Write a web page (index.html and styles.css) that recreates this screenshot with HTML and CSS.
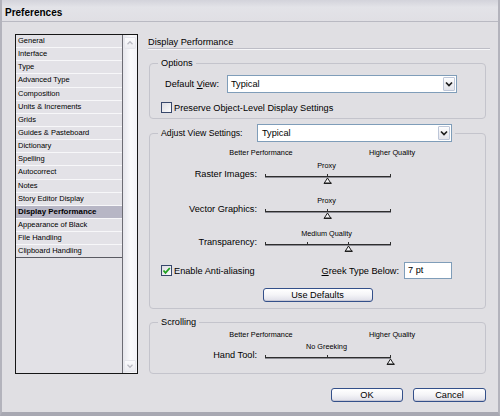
FILE: index.html
```html
<!DOCTYPE html>
<html>
<head>
<meta charset="utf-8">
<title>Preferences</title>
<link rel="stylesheet" href="styles.css">
</head>
<body>
<div class="window">
  <div class="titlebar">Preferences</div>
  <div class="content">
    <div class="listbox">
      <ul class="items">
        <li>General</li>
        <li>Interface</li>
        <li>Type</li>
        <li>Advanced Type</li>
        <li>Composition</li>
        <li>Units &amp; Increments</li>
        <li>Grids</li>
        <li>Guides &amp; Pasteboard</li>
        <li>Dictionary</li>
        <li>Spelling</li>
        <li>Autocorrect</li>
        <li>Notes</li>
        <li>Story Editor Display</li>
        <li class="selected">Display Performance</li>
        <li>Appearance of Black</li>
        <li>File Handling</li>
        <li>Clipboard Handling</li>
      </ul>
      <div class="scrollbar">
        <div class="sbtn"><svg width="12" height="12" viewBox="0 0 12 12"><polyline points="3,7.5 6,4.5 9,7.5" fill="none" stroke="#b9b9c2" stroke-width="1.5"/></svg></div>
        <div class="sbtn"><svg width="12" height="12" viewBox="0 0 12 12"><polyline points="3,4.5 6,7.5 9,4.5" fill="none" stroke="#b9b9c2" stroke-width="1.5"/></svg></div>
      </div>
    </div>

    <div class="panel">
      <div class="heading">Display Performance</div>

      <fieldset class="group options">
        <legend>Options</legend>
        <div class="dv-row">
          <span class="dv-label">Default <u>V</u>iew:</span>
          <div class="select dv-select">
            <span class="sel-text">Typical</span>
            <span class="arrow"><svg width="8" height="6" viewBox="0 0 8 6"><polyline points="1,1.5 4,4.5 7,1.5" fill="none" stroke="#1e1e1e" stroke-width="1.7"/></svg></span>
          </div>
        </div>
        <div class="check-row">
          <span class="cb"></span>
          <span>Preserve Object-Level Display Settings</span>
        </div>
      </fieldset>

      <fieldset class="group adjust">
        <legend>
          <div class="legend-flex">
            <span class="adj-label">Ad<u>j</u>ust View Settings:</span>
            <div class="select adj-select">
              <span class="sel-text">Typical</span>
              <span class="arrow"><svg width="8" height="6" viewBox="0 0 8 6"><polyline points="1,1.5 4,4.5 7,1.5" fill="none" stroke="#1e1e1e" stroke-width="1.7"/></svg></span>
            </div>
          </div>
        </legend>
        <div class="scale"><span>Better Performance</span><span>Higher Quality</span></div>

        <div class="srow r1">
          <span class="slabel">Raster Images:</span>
          <div class="slider">
            <div class="val">Proxy</div>
            <svg class="track" width="134" height="10" viewBox="0 0 134 10">
              <rect x="3" y="2" width="126" height="1" fill="#2e2e2e"/>
              <rect x="3" y="3" width="126" height="1" fill="#8c8c94"/>
              <rect x="3" y="0" width="1" height="2" fill="#2e2e2e"/>
              <rect x="65" y="0" width="1" height="2" fill="#2e2e2e"/>
              <rect x="128" y="0" width="1" height="2" fill="#2e2e2e"/>
              <polygon points="65.5,4 69,9.5 62,9.5" fill="#f2f2f4" stroke="#1e1e1e" stroke-width="1"/>
              <rect x="62" y="8.5" width="7.5" height="1.5" fill="#1e1e1e"/>
            </svg>
          </div>
        </div>

        <div class="srow r2">
          <span class="slabel">Vector Graphics:</span>
          <div class="slider">
            <div class="val">Proxy</div>
            <svg class="track" width="134" height="10" viewBox="0 0 134 10">
              <rect x="3" y="2" width="126" height="1" fill="#2e2e2e"/>
              <rect x="3" y="3" width="126" height="1" fill="#8c8c94"/>
              <rect x="3" y="0" width="1" height="2" fill="#2e2e2e"/>
              <rect x="65" y="0" width="1" height="2" fill="#2e2e2e"/>
              <rect x="128" y="0" width="1" height="2" fill="#2e2e2e"/>
              <polygon points="65.5,4 69,9.5 62,9.5" fill="#f2f2f4" stroke="#1e1e1e" stroke-width="1"/>
              <rect x="62" y="8.5" width="7.5" height="1.5" fill="#1e1e1e"/>
            </svg>
          </div>
        </div>

        <div class="srow r3">
          <span class="slabel">Transparency:</span>
          <div class="slider">
            <div class="val">Medium Quality</div>
            <svg class="track" width="134" height="10" viewBox="0 0 134 10">
              <rect x="3" y="2" width="126" height="1" fill="#2e2e2e"/>
              <rect x="3" y="3" width="126" height="1" fill="#8c8c94"/>
              <rect x="3" y="0" width="1" height="2" fill="#2e2e2e"/>
              <rect x="45" y="0" width="1" height="2" fill="#2e2e2e"/>
              <rect x="86" y="0" width="1" height="2" fill="#2e2e2e"/>
              <rect x="128" y="0" width="1" height="2" fill="#2e2e2e"/>
              <polygon points="86.5,4 90,9.5 83,9.5" fill="#f2f2f4" stroke="#1e1e1e" stroke-width="1"/>
              <rect x="83" y="8.5" width="7.5" height="1.5" fill="#1e1e1e"/>
            </svg>
          </div>
        </div>

        <div class="aa-row">
          <span class="cb checked"><svg width="9" height="9" viewBox="0 0 9 9"><polyline points="1.5,4.5 3.5,6.8 7.8,2" fill="none" stroke="#21a121" stroke-width="1.8"/></svg></span>
          <span>Enable Anti-aliasing</span>
          <div class="greek">
            <span><u>G</u>reek Type Below:</span>
            <div class="input">7 pt</div>
          </div>
        </div>

        <div class="btn-row"><button class="btn defaults">Use Defaults</button></div>
      </fieldset>

      <fieldset class="group scrolling">
        <legend>Scrolling</legend>
        <div class="scale"><span>Better Performance</span><span>Higher Quality</span></div>
        <div class="srow r4">
          <span class="slabel">Hand Tool:</span>
          <div class="slider">
            <div class="val">No Greeking</div>
            <svg class="track" width="134" height="10" viewBox="0 0 134 10">
              <rect x="3" y="2" width="126" height="1" fill="#2e2e2e"/>
              <rect x="3" y="3" width="126" height="1" fill="#8c8c94"/>
              <rect x="3" y="0" width="1" height="2" fill="#2e2e2e"/>
              <rect x="65" y="0" width="1" height="2" fill="#2e2e2e"/>
              <rect x="128" y="0" width="1" height="2" fill="#2e2e2e"/>
              <polygon points="128.5,4 132,9.5 125,9.5" fill="#f2f2f4" stroke="#1e1e1e" stroke-width="1"/>
              <rect x="125" y="8.5" width="7.5" height="1.5" fill="#1e1e1e"/>
            </svg>
          </div>
        </div>
      </fieldset>

      <div class="actions">
        <button class="btn ok">OK</button>
        <button class="btn cancel">Cancel</button>
      </div>
    </div>
  </div>
</div>
</body>
</html>
```

FILE: styles.css
```css
* { box-sizing: border-box; }
html, body { margin: 0; padding: 0; }
body {
  width: 500px;
  height: 416px;
  overflow: hidden;
  background: #e0dfe3;
  font-family: "Liberation Sans", Arial, sans-serif;
  font-size: 9.2px;
  color: #000;
}
u { text-decoration: underline; text-underline-offset: 1px; }

.window {
  width: 500px;
  height: 416px;
  border-left: 2px solid #b3b3bc;
  border-right: 2px solid #b3b3bc;
  border-bottom: 4px solid #a8a8b2;
  display: flex;
  flex-direction: column;
  background: #e0dfe3;
}
.titlebar {
  flex: none;
  height: 22px;
  padding: 4px 0 0 3px;
  line-height: 17px;
  font-size: 10px;
  font-weight: bold;
  border-bottom: 1px solid #b9b9c2;
  background: linear-gradient(#d3d3db, #e3e3e8 35%, #e0dfe4);
}
.content {
  flex: 1;
  display: flex;
  padding: 12px 0 0 13px;
}

/* left list */
.listbox {
  flex: none;
  width: 123px;
  height: 340px;
  border: 1px solid #161616;
  display: flex;
  background: #e2e1e6;
}
.items {
  list-style: none;
  margin: 0;
  padding: 0;
  width: 107px;
  border-right: 1px solid #6c6c74;
}
.items li {
  height: 13.15px;
  line-height: 12px;
  padding-left: 2px;
  font-size: 7.5px;
  white-space: nowrap;
  background: #e3e2e7;
  border-bottom: 1px solid #f7f7f9;
}
.items li:last-child { border-bottom: 1px solid #5a5a62; }
.items li.selected {
  background: #b7b6c5;
  font-weight: bold;
  font-size: 7.9px;
}
.scrollbar {
  width: 14px;
  display: flex;
  flex-direction: column;
  justify-content: space-between;
  background: linear-gradient(to right, #e6e6ec, #fafafc 55%, #f3f3f7);
}
.sbtn {
  width: 12px;
  height: 12px;
  margin: 2px 0 1px 1px;
  border: 1px solid #e6e6ec;
  border-radius: 1px;
  background: linear-gradient(#fbfbfd, #ececf1);
  display: flex;
  align-items: center;
  justify-content: center;
}
.sbtn svg { display: block; }

/* right panel */
.panel {
  flex: none;
  width: 342px;
  margin-left: 10px;
}
.heading {
  margin-top: 2px;
  height: 13px;
  line-height: 12px;
  border-bottom: 1px solid #bdbdc6;
  box-shadow: 0 1px 0 #f6f6f8;
}
.group {
  margin: 0 4px 0 1px;
  padding: 0 8px;
  border: 1px solid #c4c4cc;
  border-radius: 4px;
  min-width: 0;
}
.group legend {
  padding: 0 3px;
  line-height: 12px;
}
.options { margin-top: 8px; padding-top: 6px; padding-bottom: 4px; }
.adjust { margin-top: 5px; padding-top: 6px; padding-bottom: 6px; }
.scrolling { margin-top: 7px; padding-top: 2px; padding-bottom: 8px; }

.dv-row {
  display: flex;
  align-items: center;
  height: 18px;
}
.dv-label { width: 62px; margin-left: 7px; white-space: nowrap; }

.select {
  height: 18px;
  border: 1px solid #7f9db9;
  background: #fff;
  display: flex;
  align-items: center;
  padding-left: 3px;
}
.dv-select { width: 230px; }
.adj-select { width: 195px; padding-left: 4px; }
.sel-text { flex: 1; line-height: 14px; }
.arrow {
  width: 12px;
  height: 14px;
  margin-right: 1px;
  border: 1px solid #bdc6d8;
  border-radius: 1px;
  background: linear-gradient(#fdfdfe, #e2e3ea);
  display: flex;
  align-items: center;
  justify-content: center;
}
.arrow svg { display: block; }

.legend-flex {
  display: flex;
  align-items: center;
}
.adj-label {
  width: 96px;
  font-size: 8.7px;
  white-space: nowrap;
}

.check-row {
  display: flex;
  align-items: center;
  height: 13px;
  margin-top: 8px;
  padding-left: 3px;
  gap: 2px;
  white-space: nowrap;
}
.cb {
  flex: none;
  width: 11px;
  height: 11px;
  border: 1px solid #37476b;
  background: linear-gradient(135deg, #dcdce2, #fbfbfc);
  display: flex;
  align-items: center;
  justify-content: center;
}
.cb svg { display: block; }

.scale {
  display: flex;
  height: 9px;
  margin-left: 53px;
  gap: 31px;
  font-size: 7.3px;
  line-height: 9px;
}
.scale span { width: 100px; text-align: center; white-space: nowrap; }

.srow {
  display: flex;
  align-items: flex-end;
  height: 23px;
}
.r1 { margin-top: 4px; }
.r2 { margin-top: 12px; }
.r3 { margin-top: 10px; }
.r4 { margin-top: 3px; }
.slabel {
  width: 99px;
  margin-right: 5px;
  margin-bottom: 4px;
  text-align: right;
  line-height: 12px;
  white-space: nowrap;
}
.slider { width: 131px; }
.val {
  width: 129px;
  height: 9px;
  margin-bottom: 4px;
  text-align: center;
  font-size: 7.3px;
  line-height: 9px;
  white-space: nowrap;
}
.track { display: block; overflow: visible; }

.aa-row {
  display: flex;
  align-items: center;
  height: 17px;
  margin-top: 10px;
  padding-left: 3px;
  gap: 2px;
  white-space: nowrap;
}
.greek {
  margin-left: auto;
  margin-right: 25px;
  display: flex;
  align-items: center;
  gap: 5px;
}
.input {
  width: 48px;
  height: 17px;
  border: 1px solid #7f9db9;
  background: #fff;
  padding-left: 3px;
  line-height: 15px;
}

.btn-row {
  display: flex;
  justify-content: center;
  margin-top: 9px;
}
.btn {
  height: 14px;
  padding: 0;
  border: 1px solid #34508a;
  border-radius: 3px;
  background: linear-gradient(#ffffff, #f4f4f7 50%, #dedee8);
  box-shadow: inset 0 -1px 0 #c9c9d6;
  font-family: inherit;
  font-size: 9.2px;
  line-height: 12px;
  color: #000;
}
.defaults { width: 110px; }
.actions {
  display: flex;
  justify-content: flex-end;
  gap: 10px;
  margin-top: 14px;
  margin-right: 4px;
}
.ok { width: 72px; }
.cancel { width: 73px; }
```
